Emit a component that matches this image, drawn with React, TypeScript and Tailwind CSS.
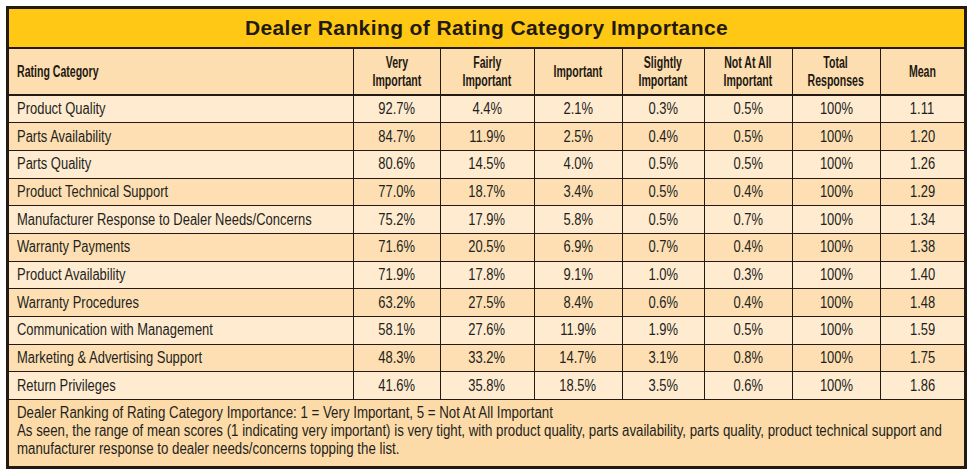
const rows: [string, string, string, string, string, string, string, string][] = [
  ["Product Quality", "92.7%", "4.4%", "2.1%", "0.3%", "0.5%", "100%", "1.11"],
  ["Parts Availability", "84.7%", "11.9%", "2.5%", "0.4%", "0.5%", "100%", "1.20"],
  ["Parts Quality", "80.6%", "14.5%", "4.0%", "0.5%", "0.5%", "100%", "1.26"],
  ["Product Technical Support", "77.0%", "18.7%", "3.4%", "0.5%", "0.4%", "100%", "1.29"],
  ["Manufacturer Response to Dealer Needs/Concerns", "75.2%", "17.9%", "5.8%", "0.5%", "0.7%", "100%", "1.34"],
  ["Warranty Payments", "71.6%", "20.5%", "6.9%", "0.7%", "0.4%", "100%", "1.38"],
  ["Product Availability", "71.9%", "17.8%", "9.1%", "1.0%", "0.3%", "100%", "1.40"],
  ["Warranty Procedures", "63.2%", "27.5%", "8.4%", "0.6%", "0.4%", "100%", "1.48"],
  ["Communication with Management", "58.1%", "27.6%", "11.9%", "1.9%", "0.5%", "100%", "1.59"],
  ["Marketing & Advertising Support", "48.3%", "33.2%", "14.7%", "3.1%", "0.8%", "100%", "1.75"],
  ["Return Privileges", "41.6%", "35.8%", "18.5%", "3.5%", "0.6%", "100%", "1.86"],
];

const headers: [string, string][] = [
  ["Very", "Important"],
  ["Fairly", "Important"],
  ["", "Important"],
  ["Slightly", "Important"],
  ["Not At All", "Important"],
  ["Total", "Responses"],
  ["", "Mean"],
];

const footer = [
  "Dealer Ranking of Rating Category Importance: 1 = Very Important, 5 = Not At All Important",
  "As seen, the range of mean scores (1 indicating very important) is very tight, with product quality, parts availability, parts quality, product technical support and",
  "manufacturer response to dealer needs/concerns topping the list.",
];

// no condensed face is installed, so the narrow look is a horizontal squeeze of Arial metrics
const squeeze = "inline-block whitespace-nowrap scale-x-[0.81]";
const squeezeBold = "inline-block whitespace-nowrap scale-x-[0.66]";
const squeezeNote = "inline-block whitespace-nowrap scale-x-[0.83] origin-left";

export default function App() {
  return (
    <div className="w-[975px] h-[472px] overflow-hidden bg-white pt-[6px] pl-[6px] font-['Liberation_Sans',Arial,sans-serif]">
      <div className="w-[961px] overflow-hidden border-[3px] border-[#231a14] bg-[#fddba8] text-[#231f20]">
        <div className="h-[40px] bg-[#ffc815] border-b-2 border-[#231a14] flex items-center justify-center">
          <h1 className="font-bold text-[21px] text-[#231a0e] tracking-[0.4px]">
            Dealer Ranking of Rating Category Importance
          </h1>
        </div>
        <table className="w-full table-fixed border-collapse">
          <colgroup>
            <col className="w-[344px]" />
            <col className="w-[87px]" />
            <col className="w-[94px]" />
            <col className="w-[88px]" />
            <col className="w-[82px]" />
            <col className="w-[88px]" />
            <col className="w-[88px]" />
            <col />
          </colgroup>
          <thead>
            <tr className="h-[46px] bg-[#fddeb0] border-b-2 border-[#231a14]">
              <th className="text-left pl-[8px] font-bold text-[16px] text-[#1e1812] overflow-hidden">
                <span className={`${squeezeBold} origin-left`}>Rating Category</span>
              </th>
              {headers.map(([a, b], i) => (
                <th
                  key={i}
                  className="border-l-[1.5px] border-[#231a14] font-bold text-[16px] leading-[18px] text-center text-[#1e1812] overflow-hidden"
                >
                  {a && (
                    <div>
                      <span className={squeezeBold}>{a}</span>
                    </div>
                  )}
                  <div>
                    <span className={squeezeBold}>{b}</span>
                  </div>
                </th>
              ))}
            </tr>
          </thead>
          <tbody>
            {rows.map((r, i) => (
              <tr
                key={r[0]}
                className={`h-[27.7px] border-b-[1.5px] border-[#231a14] ${i % 2 === 0 ? "bg-[#ffebd0]" : "bg-[#fddfb3]"}`}
              >
                <td className="pl-[8px] text-[16px] leading-[20px] overflow-hidden">
                  <span className={`${squeeze} origin-left`}>{r[0]}</span>
                </td>
                {r.slice(1).map((v, j) => (
                  <td key={j} className="border-l-[1.5px] border-[#231a14] text-center text-[16px] leading-[20px]">
                    <span className={squeeze}>{v}</span>
                  </td>
                ))}
              </tr>
            ))}
          </tbody>
        </table>
        <div className="overflow-hidden px-[8px] pt-[4px] pb-[8px] text-[16px] leading-[18px]">
          {footer.map((line) => (
            <div key={line}>
              <span className={squeezeNote}>{line}</span>
            </div>
          ))}
        </div>
      </div>
    </div>
  );
}
